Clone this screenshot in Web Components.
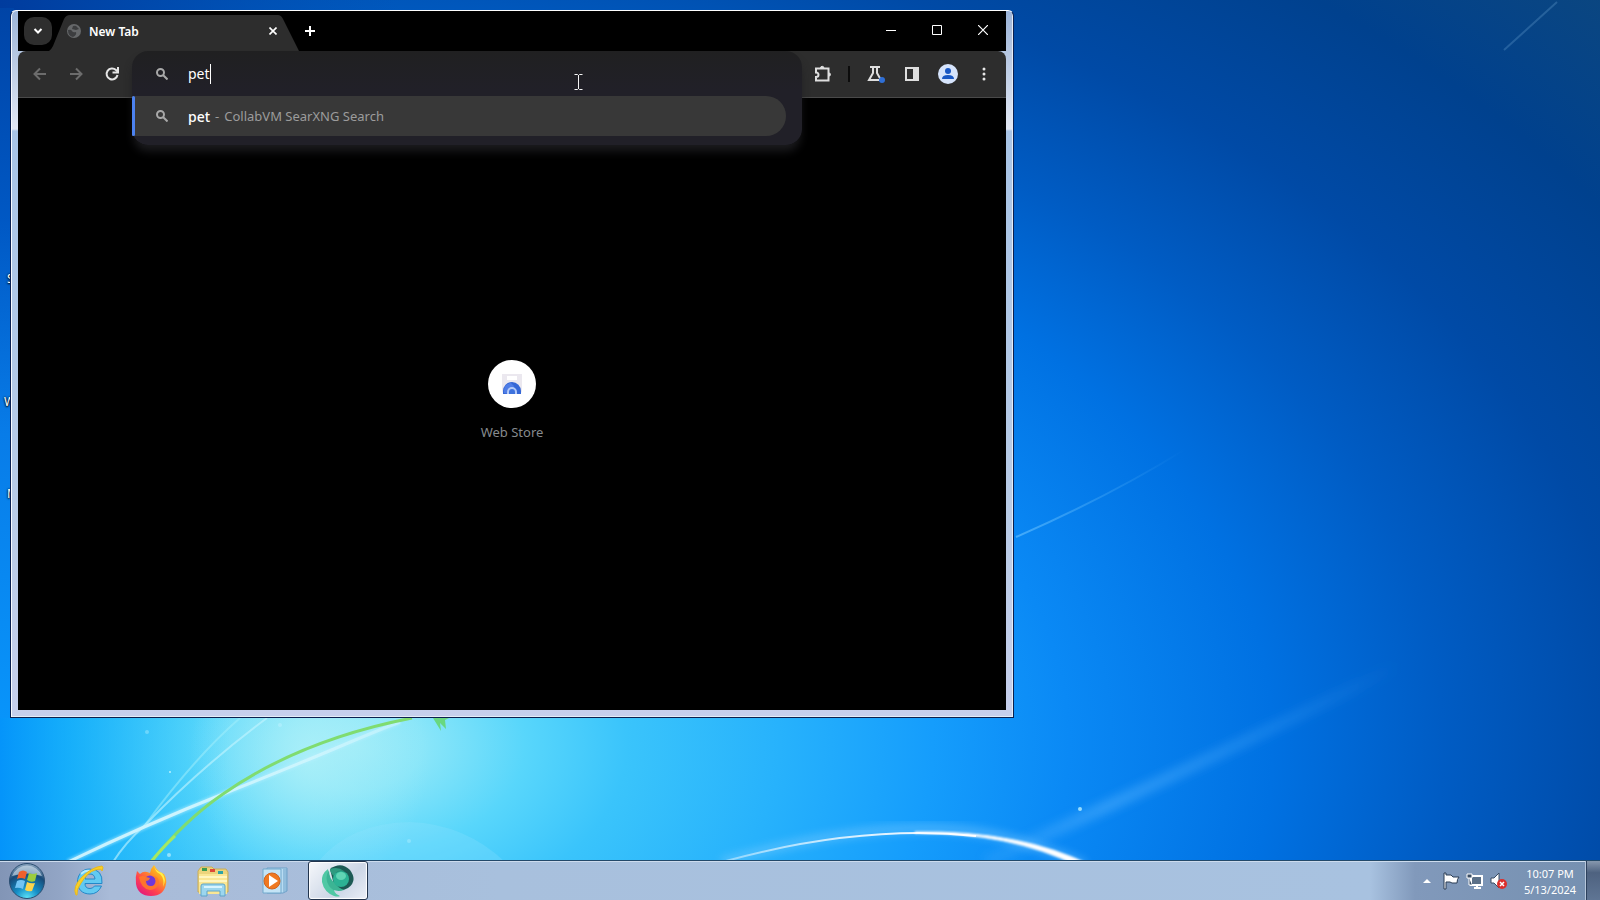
<!DOCTYPE html>
<html lang="en">
<head>
<meta charset="utf-8">
<title>Desktop</title>
<style>
html,body{height:100%;margin:0;overflow:hidden}
body{font-family:"Noto Sans","Open Sans",sans-serif;font-size:13px}
</style>
</head>
<body>
<desk-top>
  <desk-label style="--x:7px;--y:270px">S</desk-label>
  <desk-label style="--x:4px;--y:393px">W</desk-label>
  <desk-label style="--x:7px;--y:485px">M</desk-label>
  <browser-window>
    <tab-strip slot="title"></tab-strip>
    <tool-bar slot="tools"></tool-bar>
    <site-tile>Web Store</site-tile>
  </browser-window>
  <text-pointer></text-pointer>
  <task-bar slot="bar"></task-bar>
</desk-top>
<script>
function define(name, html) {
  const t = document.createElement('template');
  t.innerHTML = html;
  customElements.define(name, class extends HTMLElement {
    constructor() {
      super();
      this.attachShadow({mode: 'open'}).append(t.content.cloneNode(true));
    }
  });
}

define('desk-top', `<style>
:host{display:flex;flex-direction:column;height:100%;position:relative;overflow:hidden;background:#0a84f0}
.area{flex:1;position:relative;min-height:0}
wall-paper{position:absolute;inset:0}
</style>
<wall-paper></wall-paper>
<main class="area"><slot></slot></main>
<slot name="bar"></slot>`);

define('wall-paper', `<style>:host{display:block}svg{display:block;width:100%;height:100%}</style>
<svg viewBox="0 0 1600 900" preserveAspectRatio="none" aria-hidden="true">
<defs>
<radialGradient id="g" gradientUnits="userSpaceOnUse" cx="0" cy="0" r="1700" gradientTransform="translate(355 745) scale(1 .65)">
<stop offset="0" stop-color="#9cebf8"/><stop offset=".04" stop-color="#8ae6f9"/><stop offset=".1" stop-color="#58d6fb"/>
<stop offset=".16" stop-color="#3ac4fb"/><stop offset=".25" stop-color="#27b2fc"/><stop offset=".34" stop-color="#159dfc"/>
<stop offset=".42" stop-color="#0a89f5"/><stop offset=".54" stop-color="#0071e2"/><stop offset=".64" stop-color="#005cc4"/>
<stop offset=".75" stop-color="#004aa6"/><stop offset=".88" stop-color="#00418e"/><stop offset="1" stop-color="#0b4680"/></radialGradient>
<radialGradient id="h" gradientUnits="userSpaceOnUse" cx="0" cy="0" r="100" gradientTransform="translate(310 755) scale(1.2 1.4)">
<stop offset="0" stop-color="#b4f2f8" stop-opacity=".7"/><stop offset="1" stop-color="#a0ecf8" stop-opacity="0"/></radialGradient>
<linearGradient id="l"><stop offset="0" stop-color="#0090fa" stop-opacity=".9"/><stop offset=".3" stop-color="#04a4fa" stop-opacity=".65"/><stop offset="1" stop-color="#20c0f8" stop-opacity="0"/></linearGradient>
<linearGradient id="u" x1="0" y1="0" x2="0" y2="1"><stop offset="0" stop-color="#0044a6"/><stop offset=".3" stop-color="#0058c4"/><stop offset=".6" stop-color="#087ce8"/><stop offset="1" stop-color="#0894fa"/></linearGradient>
<linearGradient id="t"><stop offset="0" stop-color="#003c9e"/><stop offset="1" stop-color="#004cb0" stop-opacity="0"/></linearGradient>
<linearGradient id="k" x1="0" y1="0" x2="1" y2="0"><stop offset="0" stop-color="#fff" stop-opacity=".4"/><stop offset=".5" stop-color="#fff" stop-opacity=".8"/><stop offset="1" stop-color="#fff"/></linearGradient>
<linearGradient id="b" gradientUnits="userSpaceOnUse" x1="980" y1="0" x2="1400" y2="0"><stop offset="0" stop-color="#58b4ff" stop-opacity=".15"/><stop offset=".3" stop-color="#58b4ff" stop-opacity=".45"/><stop offset="1" stop-color="#58b4ff" stop-opacity="0"/></linearGradient>
<linearGradient id="r" gradientUnits="userSpaceOnUse" x1="1016" y1="0" x2="1184" y2="0"><stop offset="0" stop-color="#6cc4ff" stop-opacity=".6"/><stop offset="1" stop-color="#58b4f8" stop-opacity="0"/></linearGradient>
<linearGradient id="f" gradientUnits="userSpaceOnUse" x1="180" y1="0" x2="400" y2="0"><stop offset="0" stop-color="#e4fbff" stop-opacity=".8"/><stop offset="1" stop-color="#e4fbff" stop-opacity=".35"/></linearGradient>
<filter id="s1"><feGaussianBlur stdDeviation="1"/></filter>
<filter id="s4" x="-20%" y="-20%" width="140%" height="140%"><feGaussianBlur stdDeviation="4"/></filter>
</defs>
<rect width="1600" height="900" fill="url(#g)"/>
<rect y="600" width="230" height="300" fill="url(#l)"/>
<rect width="400" height="12" fill="url(#t)"/>
<rect y="8" width="14" height="710" fill="url(#u)"/>
<ellipse cx="310" cy="755" rx="120" ry="140" fill="url(#h)"/>
<path d="M318 862Q350 823 410 822Q465 824 505 862Z" fill="#9be4ff" opacity=".22"/>
<g fill="none">
<path d="M985 862Q1180 775 1400 665" stroke="url(#b)" stroke-width="13" filter="url(#s4)"/>
<path d="M68 862Q145 825 223 794T341 746T400 722" stroke="#b8efff" stroke-width="6" opacity=".45" filter="url(#s1)"/>
<path d="M68 862Q145 825 223 794T341 746T400 722" stroke="url(#f)" stroke-width="3"/>
<path d="M113 862Q125 843 145 825Q200 768 267 718" stroke="#c4f5ff" stroke-width="2" opacity=".6"/>
<path d="M145 825Q195 757 240 718" stroke="#a4f0fc" stroke-width="2" opacity=".5"/>
<path d="M151 862Q185 820 223 794Q300 740 412 718" stroke="#80dc70" stroke-width="3"/>
<path d="M151 862Q160 850 175 836" stroke="#a4e864" stroke-width="3"/>
<path d="M722 862Q920 805 1030 845Q1060 853 1085 865" stroke="#8ed2ff" stroke-width="9" opacity=".4" filter="url(#s4)"/>
<path d="M722 862Q860 824 976 836" stroke="url(#k)" stroke-width="2"/>
<path d="M915 833Q1010 832 1078 866L1092 866Q1020 830 915 832Z" fill="#fff" stroke="#fff" filter="url(#s1)"/>
<path d="M1016 537Q1110 496 1184 450" stroke="url(#r)" stroke-width="2"/>
<path d="M1504 50L1557 2" stroke="#6ea4d4" stroke-width="2" opacity=".3"/>
</g>
<path d="M433 718l8 13-1-8 6 6-1-9 4-2Z" fill="#68d880"/>
<g fill="#b8f0ff"><circle cx="1080" cy="809" r="2" opacity=".8"/><circle cx="170" cy="772" r="1"/><circle cx="169" cy="855" r="2" opacity=".7"/><circle cx="280" cy="725" r="2" opacity=".6"/><circle cx="147" cy="732" r="2" opacity=".4"/><circle cx="409" cy="841" r="2" opacity=".4"/></g>
</svg>`);

define('desk-label', `<style>:host{position:absolute;left:var(--x);top:var(--y);color:#fff;font-size:12px;line-height:18px;text-shadow:0 1px 2px #000,0 0 2px #000}</style><slot></slot>`);

define('browser-window', `<style>
:host{position:absolute;inset:10px 586px 142px 10px;box-sizing:border-box;display:flex;flex-direction:column;
padding:0 7px 7px;border:1px solid #0b2050;border-top-color:#fff;border-radius:6px 6px 0 0;
background:linear-gradient(#9cb4d8 0,#e2e8f4 118px,#a8c4e6 120px,#b8cbe6 70%,#c6cfec);box-shadow:inset 1px 0 #f8fbff,inset -1px -1px #e4ecf6}
.page{flex:1;background:#000;display:flex;justify-content:center;align-items:flex-start;padding-top:262px;min-height:0}
</style>
<slot name="title"></slot><slot name="tools"></slot>
<div class="page"><slot></slot></div>`);

define('tab-strip', `<style>
:host{display:flex;height:40px;background:#000;align-items:stretch}
button{border:0;padding:0;background:none;color:#fff;display:grid;place-items:center}
.list{width:28px;height:28px;border-radius:10px;background:#2e2e2e;margin:6px 0 0 6px}
.tab{width:250px;margin:4px 0 0 -3px;position:relative;display:flex;align-items:center;box-sizing:border-box;padding:0 18px 4px;color:#fff;font-size:12px;font-weight:600}
.shape{position:absolute;inset:0;width:100%;height:100%}
.tab>*:not(.shape){position:relative}
.name{flex:1;margin-left:8px}
.x{width:16px;height:16px}
.new{width:28px;height:28px;margin:6px 0 0 -3px}
.gap{flex:1}
.ctl{width:46px;height:38px}
svg{display:block}
</style>
<button class="list" aria-label="Search tabs"><svg width="12" height="12" viewBox="0 0 12 12" fill="none" stroke="#fff" stroke-width="2"><path d="M2.5 4 6 7.500 9.500 4"/></svg></button>
<div class="tab"><svg class="shape" viewBox="0 0 250 36" preserveAspectRatio="none"><path d="M0 36Q2 35 4 31L15 4Q17 0 21 0H229Q232 0 234 4L250 36Z" fill="#2d2d2d"/></svg>
<svg width="14" height="14" viewBox="0 0 14 14"><circle cx="7" cy="7" r="7" fill="#66686a"/><path d="M1 6q3-1 4 1t4 1q1 3-3 5Q1 12 1 6M6 2q3-1 4 1l2 2-3 1-4-1Z" fill="#3c3d3f"/></svg>
<span class="name">New Tab</span>
<button class="x" aria-label="Close tab"><svg width="8" height="8" viewBox="0 0 8 8" stroke="#fff" stroke-width="1.600"><path d="m.5.5 7 7m0-7-7 7"/></svg></button></div>
<button class="new" aria-label="New tab"><svg width="12" height="12" viewBox="0 0 12 12" stroke="#fff" stroke-width="2"><path d="M6 1v10M1 6h10"/></svg></button>
<span class="gap"></span>
<button class="ctl" aria-label="Minimize"><svg width="10" height="10" viewBox="0 0 10 10" stroke="#fff"><path d="M0 5.500h10"/></svg></button>
<button class="ctl" aria-label="Maximize"><svg width="10" height="10" viewBox="0 0 10 10" stroke="#fff" fill="none"><path d="M.5.5h9v9h-9z"/></svg></button>
<button class="ctl" aria-label="Close"><svg width="10" height="10" viewBox="0 0 10 10" stroke="#fff" stroke-width="1.200"><path d="m0 0 10 10m0-10L0 10"/></svg></button>`);

define('tool-bar', `<style>
:host{display:flex;height:46px;padding:0 4px;background:#2d2d2d;border-bottom:1px solid #4a4a4a;align-items:center;border-radius:8px 8px 0 0}
button{width:36px;height:34px;border:0;padding:0;background:none;display:grid;place-items:center}
omni-box{flex:1;align-self:stretch;margin:0 3px 0 2px}
hr{width:2px;height:16px;border:0;margin:0 8px 0 7px;background:#0c0c0c}
</style>
<button aria-label="Back"><svg width="14" height="14" viewBox="0 0 14 14" fill="none" stroke="#6c6c6c" stroke-width="2"><path d="M13 7H2M7 1.500 1.500 7 7 12.500"/></svg></button>
<button aria-label="Forward"><svg width="14" height="14" viewBox="0 0 14 14" fill="none" stroke="#6c6c6c" stroke-width="2"><path d="M1 7h11M7 1.500 12.500 7 7 12.500"/></svg></button>
<button aria-label="Reload"><svg width="16" height="16" viewBox="0 0 16 16" fill="none" stroke="#e6e6e6" stroke-width="2"><path d="M13.500 9A5.500 5.500 0 1 1 12 4l2 2"/><path d="M14 1v5.500H8.500"/></svg></button>
<omni-box></omni-box>
<button aria-label="Extensions"><svg width="18" height="18" viewBox="0 0 18 18" fill="none" stroke="#dedede" stroke-width="2"><path d="M2 3.500h12.500v12H2v-3.500q2.500 0 2.500-2.200T2 7.500Z"/><path d="M6.500 3a1.700 1.700 0 0 1 3.400 0ZM15 8a1.500 1.500 0 0 1 0 3Z" fill="#dedede" stroke-width="1"/></svg></button>
<hr>
<button aria-label="Labs"><svg width="20" height="18" viewBox="0 0 20 18" fill="none" stroke="#dedede" stroke-width="2"><path d="M4 2h10M7 2v6l-4 7h12l-4-7V2"/><circle cx="16" cy="15" r="3" fill="#2f6fd6" stroke="none"/></svg></button>
<button aria-label="Side panel"><svg width="16" height="16" viewBox="0 0 16 16"><path d="M2 2h12v12H2z" fill="none" stroke="#dedede" stroke-width="2"/><path d="M9 2h5v12H9z" fill="#dedede"/></svg></button>
<button aria-label="Profile"><svg width="20" height="20" viewBox="0 0 20 20"><circle cx="10" cy="10" r="10" fill="#d6e4fc"/><circle cx="10" cy="7" r="3" fill="#1857c4"/><path d="M4 15q0-4 6-4t6 4Z" fill="#1857c4"/></svg></button>
<button aria-label="Menu"><svg width="4" height="16" viewBox="0 0 4 16" fill="#e6e6e6"><circle cx="2" cy="3" r="1.500"/><circle cx="2" cy="8" r="1.500"/><circle cx="2" cy="13" r="1.500"/></svg></button>`);

define('omni-box', `<style>
:host{display:block;position:relative;font-size:14px}
.pop{position:absolute;inset:0 0 auto 0;z-index:2;background:linear-gradient(#202021,#212028 40px);border-radius:16px;padding-bottom:9px;box-shadow:0 8px 10px -2px #1c1c1f}
.field,.row{display:flex;align-items:center;padding-left:24px}
.field{height:45px}
svg{flex:none;margin-right:20px}
input{all:unset;field-sizing:content;color:#fff;line-height:20px;caret-color:transparent}
.caret{width:1px;height:20px;background:#fff}
.row{height:40px;box-sizing:border-box;margin-right:16px;background:#383838;border-radius:0 20px 20px 0;position:relative;overflow:hidden;font-size:13px;color:#9c9c9c}
.row::before{content:"";position:absolute;left:0;top:0;bottom:0;width:3px;border-radius:2px;background:#4c82f0}
b{font-weight:500;color:#fff;font-size:14px}
.dash{margin:0 5px}
</style>
<div class="pop">
<div class="field"><svg width="12" height="12" viewBox="0 0 12 12" fill="none" stroke="#a8a8a8" stroke-width="2"><circle cx="4.500" cy="4.500" r="3.500"/><path d="m7 7 4.500 4.500"/></svg><input value="pet" aria-label="Address and search bar" size="1"><span class="caret"></span></div>
<div class="row"><svg width="12" height="12" viewBox="0 0 12 12" fill="none" stroke="#a8a8a8" stroke-width="2"><circle cx="4.500" cy="4.500" r="3.500"/><path d="m7 7 4.500 4.500"/></svg><b>pet</b><span class="dash">-</span><span>CollabVM SearXNG Search</span></div>
</div>`);

define('site-tile', `<style>
a{display:flex;flex-direction:column;align-items:center;gap:14px;text-decoration:none;color:#868a8e;font-size:13px;line-height:20px}
.disc{width:48px;height:48px;border-radius:50%;background:#fff;display:grid;place-items:center}
</style>
<a href="#"><span class="disc"><svg width="22" height="20" viewBox="0 0 22 20"><path d="M1 0h20v16q0 4-4 4H5q-4 0-4-4Z" fill="#ebe8ef"/><path d="M6 2h10v4H6z" fill="#fff"/><path d="M2 20v-3a9 9 0 0 1 18 0v3Z" fill="#3567d6"/><path d="M3 19q-1-9 7-10l3 3-5 8Z" fill="#4f7de6"/><path d="M6 20v-2a5 5 0 0 1 10 0v2Z" fill="#b4caf8"/><path d="M8 20v-2a3 3 0 0 1 6 0v2Z" fill="#3e72dd"/></svg></span><slot></slot></a>`);

define('text-pointer', `<style>:host{position:absolute;left:574px;top:73px;z-index:3}svg{display:block}</style>
<svg width="9" height="18" viewBox="0 0 9 18" fill="none" stroke="#f4f4f4"><path d="M.5 1.500h3l1 1 1-1h3M4.500 2v14M.5 16.500h3l1-1 1 1h3"/></svg>`);

define('task-bar', `<style>
:host{position:relative;display:flex;height:39px;border-top:1px solid #22496a;box-shadow:inset 0 1px #cddcee;
background:linear-gradient(90deg,#8295b6,#92a5c5 60px,#a9bbd8 110px,#a8c0dd 500px,#a8c2e0 calc(100% - 230px),#8199bb calc(100% - 185px),#7590b0)}
button{border:0;padding:0;background:none;display:grid;place-items:center;width:62px}
.start{width:54px;margin-right:4px}
.on{width:60px;margin-left:2px;box-sizing:border-box;border:1px solid #22354e;border-radius:3px;background:linear-gradient(135deg,#f6f8fb,#ccd6e6 60%,#eaeff7);box-shadow:inset 0 0 1px 1px #fff}
.gap{flex:1}
.tray{display:flex;align-items:center}
.tray button{width:24px}
time{color:#fff;font-size:11px;line-height:16px;text-align:center;width:70px;margin-left:4px;padding-top:2px}
time span{display:block}
.peek{width:15px;background:linear-gradient(#8798ae,#4e6280 30%,#5f7594);border-left:1px solid #b6c6da;box-shadow:inset 1px 0 #2c405c}
svg{display:block}
</style>
<button class="start" aria-label="Start"><svg width="36" height="36" viewBox="0 0 36 36"><defs><radialGradient id="o" cx=".5" cy="1" r=".95"><stop offset="0" stop-color="#5fe6fa"/><stop offset=".35" stop-color="#1690c8"/><stop offset=".75" stop-color="#174a78"/><stop offset="1" stop-color="#7f9cb8"/></radialGradient></defs><circle cx="18" cy="18" r="17.500" fill="url(#o)" stroke="#2b4e72"/><path d="M3 13A16 16 0 0 1 33 13Q18 8 3 13Z" fill="#dceaf4" opacity=".6"/><path d="M10 9q4-3 8 0l-2 7q-4-2-8 0Z" fill="#f0602c"/><path d="M20 10q4 2 8 0l-2 8q-4 2-8-1Z" fill="#9ccc3c"/><path d="M8 18q4-2 8 0l-2 8q-4-2-8-1Z" fill="#72c4f4"/><path d="M18 19q4 2 8 1l-3 8q-4 1-7-1Z" fill="#fcd44c"/></svg></button>
<button aria-label="Internet Explorer"><svg width="32" height="32" viewBox="0 0 32 32"><path d="M16.500 4C9 4 4.500 10 4.500 17S9 29 17 29q8 0 11.500-8h-7q-1.500 2.500-4.500 2.500-5 0-5-5h17Q30 4 16.500 4ZM12 14q.5-5 5-5t5 5Z" fill="#62caf2" stroke="#2488c8"/><path d="M8 9q4-4 9-3" stroke="#b4ecff" stroke-width="2" fill="none"/><path d="M3 30Q-1 22 9 12T29 1q2 1 0 5 0-3-7-1T8 18Q3 25 4 30Z" fill="#f8d028" stroke="#e8b81c"/></svg></button>
<button aria-label="Firefox"><svg width="32" height="32" viewBox="0 0 32 32"><defs><linearGradient id="x" x1="1" y1="0" x2=".2" y2="1"><stop offset="0" stop-color="#ffe840"/><stop offset=".35" stop-color="#ffa020"/><stop offset=".7" stop-color="#ff4050"/><stop offset="1" stop-color="#e01880"/></linearGradient></defs><path d="M19 0q2 4 6 7l4 2q3 5 2 10-2 12-15 12T1 19Q0 12 2 6l3 3q3-3 7-2l3 1q1-5 4-8Z" fill="url(#x)"/><circle cx="15" cy="16" r="5.500" fill="#7038d8"/><path d="M4 12q4-2 7 0l4 1q-1 3-4 3 0 5 5 5 6 0 5-6-1-3-4-4 7 0 7 7-2 7-9 7Q6 24 4 12Z" fill="#ff7a28" opacity=".9"/><path d="M19 0q1 7 6 9 5 5 3 13 4-8-1-14Q20 6 19 0Z" fill="#fff04a"/></svg></button>
<button aria-label="Windows Explorer"><svg width="34" height="32" viewBox="0 0 34 32"><path d="M2 6 5 2h11l2 2h12l2 3v20H2Z" fill="#ecd47c" stroke="#c8ac58"/><path d="M6 3h5v3H6z" fill="#3c9c50"/><path d="M14 4h5v3h-5z" fill="#e04838"/><path d="M22 6h5v3h-5z" fill="#2ca4a8"/><path d="M3 9h28v20H3z" fill="#fae694"/><path d="M3 12h28M3 16h28" stroke="#fff6c0" stroke-width="2"/><path d="M5 31V21q0-2 2-2h20q2 0 2 2v10h-5v-5H11v5Z" fill="#9cd6ee" stroke="#5fa4c8"/><path d="M8 22h18" stroke="#d8f4ff" stroke-width="2"/></svg></button>
<button aria-label="Windows Media Player"><svg width="30" height="30" viewBox="0 0 30 30"><path d="M7 2h20v23l-4 2H7Z" fill="#b8dcf2" stroke="#6ca0c8"/><path d="M24 3v23M26 3v22" stroke="#6ca0c8"/><path d="M3 3h18v24H3z" fill="#c4e4f6" stroke="#70a8cc"/><circle cx="12" cy="15" r="8" fill="#f07820" stroke="#d06420"/><path d="m9 9 9 6-9 6Z" fill="#fff"/></svg></button>
<button class="on" aria-label="Browser"><svg width="34" height="34" viewBox="0 0 34 34"><path d="M9 5Q20-3 29 6q8 11-2 18-7 4-13 1Z" fill="#1c5a54"/><path d="M9 5q8-3 14 2-8-1-10 5Q9 9 9 5Z" fill="#2f9a80"/><path d="M7 5Q0 10 1 18q2 10 12 14 4 1 6 0-8-3-5-9Q7 17 7 5Z" fill="#50c8a4"/><path d="M8 6q0 9 6 13 3 5 9 7-10 3-15-4Q3 14 8 6" fill="#3cb494"/><circle cx="20" cy="15" r="8" fill="#2cb294"/><ellipse cx="20" cy="12" rx="5" ry="4" fill="#60d4b4"/></svg></button>
<span class="gap"></span>
<div class="tray">
<button aria-label="Show hidden icons"><svg width="8" height="4" viewBox="0 0 8 4"><path d="m0 4 4-4 4 4Z" fill="#fff"/></svg></button>
<button aria-label="Action Center"><svg width="18" height="18" viewBox="0 0 18 18"><path d="M2 1v16h2v-7h4l2 1h5q0-4 2-6h-6l-2-2H4V1Z" fill="#fff" stroke="#2b3d55"/></svg></button>
<button aria-label="Network"><svg width="18" height="18" viewBox="0 0 18 18"><path d="M5 4h11v9H5z" fill="#5b7088" stroke="#fff" stroke-width="2"/><path d="M8 16h7M11 13v3" stroke="#fff" stroke-width="2"/><path d="M1 2h5v4H1zM3 6v7h3" fill="#3a4d64" stroke="#fff"/></svg></button>
<button aria-label="Volume muted"><svg width="18" height="18" viewBox="0 0 18 18"><path d="M1 6h3l5-5v15l-5-5H1Z" fill="#fff" stroke="#3a4d64"/><circle cx="12" cy="12" r="5" fill="#dc2f2c"/><path d="m10 10 4 4m0-4-4 4" stroke="#fff" stroke-width="1.500"/></svg></button>
<time datetime="2024-05-13T22:07"><span>10:07 PM</span><span>5/13/2024</span></time>
</div>
<button class="peek" aria-label="Show desktop"></button>`);
</script>
</body>
</html>
